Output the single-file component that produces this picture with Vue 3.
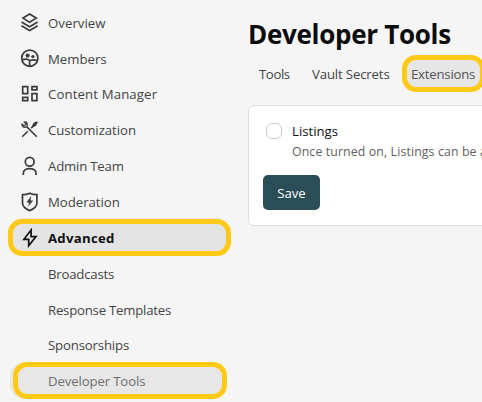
<script setup>
import { ref } from 'vue'

const items = [
  { label: 'Overview', icon: 'layers', spacing: '0.05px' },
  { label: 'Members', icon: 'members', spacing: '0px' },
  { label: 'Content Manager', icon: 'grid', spacing: '0.13px' },
  { label: 'Customization', icon: 'tools', spacing: '-0.03px' },
  { label: 'Admin Team', icon: 'person', spacing: '-0.2px' },
  { label: 'Moderation', icon: 'shield', spacing: '-0.03px' },
  { label: 'Advanced', icon: 'bolt', spacing: '0.27px', active: true },
  { label: 'Broadcasts', spacing: '-0.2px' },
  { label: 'Response Templates', spacing: '-0.22px' },
  { label: 'Sponsorships', spacing: '-0.16px' },
  { label: 'Developer Tools', spacing: '-0.13px', current: true }
]
const listings = ref(false)
</script>

<template>
  <div class="page">
    <nav class="sidebar">
      <a v-for="item in items" :key="item.label" class="item" :class="{ active: item.active, current: item.current }">
        <span class="icon">
          <svg v-if="item.icon === 'layers'" viewBox="0 0 20 20"><path d="M9.6 1 16.2 5.1 9.6 9.2 3 5.1Z M1.5 9 9.6 13.7 17.7 9 M1.5 12.8 9.6 17.5 17.7 12.8" /></svg>
          <svg v-else-if="item.icon === 'members'" viewBox="0 0 20 20"><circle cx="9.8" cy="9.2" r="8.1" /><circle class="fill" cx="7.6" cy="6.6" r="2.1" /><circle class="fill" cx="12.9" cy="7.6" r="1.7" /><path d="M1.8 11.1C4.8 10 8 10 9.6 11.5V17.3M9.6 11.7C11.8 10.6 14.8 10.6 17.8 11.5" /></svg>
          <svg v-else-if="item.icon === 'grid'" viewBox="0 0 20 20"><path d="M2.7 2.7H7.7V9.6H2.7Z M12 2.7H16.9V5.8H12Z M2.7 13.4H7.7V16.7H2.7Z M12 9.6H16.9V16.7H12Z" /></svg>
          <svg v-else-if="item.icon === 'tools'" viewBox="0 0 20 20" class="fine"><path d="M2.2 16.7 7.8 11.2 M6.6 6.6 16.8 16.7" /><path class="thin" d="M2 4 4.1 6 6.2 4 4.2 2C6.5 1.4 8 3.6 7.1 5.8L5.8 7.2C3.6 7.9 1.4 6.2 2 4Z" /><path d="M11.2 8.1 14 5.3" /><path class="fill" d="M12 6 13.6 2.8 16.6 1.2 17.8 2.4 16.2 5.4 13.2 7.2Z" /></svg>
          <svg v-else-if="item.icon === 'person'" viewBox="0 0 20 20"><circle cx="9.7" cy="5.7" r="4.4" /><path d="M3.3 19V17.4C3.3 11 16.1 11 16.1 17.4V19" /></svg>
          <svg v-else-if="item.icon === 'shield'" viewBox="0 0 20 20"><path d="M9.7 1.2C12 2.3 14.7 2.7 16.9 2.7V11C16.9 15 13.5 17 9.7 18.6 5.9 17 2.5 15 2.5 11V2.7C4.7 2.7 7.4 2.3 9.7 1.2Z" /><path class="fill" d="M11.3 4 6.3 10.5H9L8.1 14.8 13.2 8.4H10.5Z" /></svg>
          <svg v-else-if="item.icon === 'bolt'" viewBox="0 0 20 20"><path d="M11.1 2 3.9 11.3H8.7V17.7L16 8.6H11.1Z" /></svg>
        </span>
        <span class="label" :style="{ letterSpacing: item.spacing }">{{ item.label }}</span>
      </a>
    </nav>
    <main class="main">
      <h1>Developer Tools</h1>
      <div class="tabs">
        <a class="tab tools-tab">Tools</a>
        <a class="tab vault-tab">Vault Secrets</a>
        <a class="tab selected">Extensions</a>
      </div>
      <section class="card">
        <label class="option">
          <input v-model="listings" type="checkbox" class="check" />
          <span class="copy">
            <span class="title">Listings</span>
            <span class="desc">Once turned on, Listings can be a</span>
          </span>
        </label>
        <button class="save">Save</button>
      </section>
    </main>
  </div>
</template>

<style>
body { background: #f5f5f5; overflow: hidden; }
</style>

<style scoped>
.page { display: flex; width: 482px; height: 402px; overflow: hidden; background: #f5f5f5; font-family: "Open Sans", "Noto Sans", sans-serif; font-size: 13.2px; color: #444; white-space: nowrap; }
.sidebar { flex: 0 0 248px; padding-top: 5px; }
.item { display: flex; align-items: center; box-sizing: border-box; height: 35.8px; padding-left: 20px; }
.icon { flex: 0 0 20px; height: 20px; margin-right: 8px; }
.icon svg { display: block; width: 20px; height: 20px; fill: none; stroke: #3c3c3c; stroke-width: 1.7; }
.icon svg.fine { stroke-width: 1.6; }
.icon svg .fill { fill: #3c3c3c; stroke: none; }
.icon svg .thin { stroke-width: 1.2; }
.active { height: 37px; margin: -0.6px 0 -0.3px 8px; width: 223px; padding-left: 7px; border: 5px solid #ffc918; border-radius: 14px; background: #e4e4e4; box-shadow: 0 -5px 0 -4px #e4e4e4; color: #111; font-weight: 700; }
.active .icon svg { stroke: #111; }
.current { height: 37px; margin: -0.9px 0 0 13px; width: 214px; padding-left: 30px; border: 5px solid #ffc918; border-radius: 14px; background: #e7e7e7; box-shadow: -4px 0 0 -1px #e7e7e7; color: #707070; }
.current .icon { display: none; }
.main { flex: 0 0 400px; padding-top: 16px; }
h1 { margin: 0; height: 36px; line-height: 36px; font-size: 26px; font-weight: 700; letter-spacing: -0.3px; color: #0c0c0c; }
.tabs { display: flex; align-items: center; height: 37px; margin-top: 3px; padding-left: 11px; letter-spacing: -0.15px; }
.tools-tab { width: 53px; letter-spacing: -0.4px; }
.vault-tab { width: 90px; }
.selected { display: flex; align-items: center; box-sizing: border-box; width: 83px; height: 37px; padding-left: 4px; border: 5px solid #ffc918; border-radius: 14px; background: #e6e6e6; color: #555; letter-spacing: -0.22px; }
.card { box-sizing: border-box; height: 121px; margin-top: 13px; padding: 15px 14px; border: 1px solid #ddd; border-radius: 6px; background: #fff; }
.option { display: flex; height: 54px; padding-left: 3px; }
.check { appearance: none; box-sizing: border-box; width: 16px; height: 16px; margin: 2px 10px 0 0; border: 1px solid #ccc; border-radius: 6px; background: #fff; }
.copy { display: flex; flex-direction: column; }
.title { line-height: 20px; color: #111; }
.desc { line-height: 20px; padding-top: 1px; font-size: 12.3px; letter-spacing: 0.13px; color: #606060; }
.save { display: block; width: 57px; height: 35px; padding: 0; border: 0; border-radius: 5px; background: #2a4d57; color: #fff; font: inherit; }
</style>
